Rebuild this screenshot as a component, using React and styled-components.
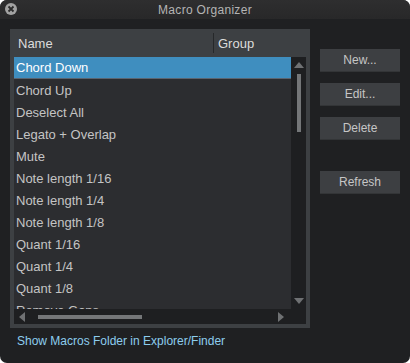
import React, { useState } from "react";
import styled, { createGlobalStyle } from "styled-components";

const GlobalStyle = createGlobalStyle`
  html, body {
    margin: 0;
    padding: 0;
    background: #ffffff;
  }
  body {
    font-family: "Liberation Sans", Arial, sans-serif;
  }
`;

const Window = styled.div`
  width: 410px;
  height: 363px;
  background: #1f2022;
  border-radius: 7px;
  overflow: hidden;
  display: flex;
  flex-direction: column;
`;

const TitleBar = styled.div`
  height: 19px;
  background: linear-gradient(#2e2e2f, #282829);
  position: relative;
  display: flex;
  align-items: center;
  justify-content: center;
  color: #b4b4b4;
  font-size: 12px;
  letter-spacing: 0.3px;
`;

const CloseBtn = styled.div`
  position: absolute;
  left: 5px;
  top: 3px;
  width: 12px;
  height: 12px;
  border-radius: 50%;
  background: #a2a2a2;
  display: flex;
  align-items: center;
  justify-content: center;
`;

const Body = styled.div`
  flex: 1;
  display: flex;
  flex-direction: column;
  padding: 10px 10px 0 10px;
`;

const Main = styled.div`
  display: flex;
  gap: 10px;
`;

const Panel = styled.div`
  width: 300px;
  height: 299px;
  box-sizing: border-box;
  background: #3d4043;
  padding: 0 4px 4px 4px;
  display: flex;
  flex-direction: column;
`;

const Header = styled.div`
  height: 28px;
  display: flex;
  align-items: center;
  color: #dcdcdc;
  font-size: 13px;
  flex-shrink: 0;
`;

const HeaderCell = styled.div`
  width: ${(p) => p.$w}px;
  display: flex;
  align-items: center;
  padding-left: 4px;
  box-sizing: border-box;
  border-right: ${(p) => (p.$divider ? "1px solid #26282a" : "none")};
  margin: ${(p) => (p.$divider ? "4px 0" : "0")};
  height: ${(p) => (p.$divider ? "20px" : "100%")};
`;

const ListArea = styled.div`
  flex: 1;
  display: grid;
  grid-template-columns: 1fr 15px;
  grid-template-rows: 1fr 15px;
  background: #1e1f21;
  overflow: hidden;
`;

const Rows = styled.div`
  background: #2c2d30;
  overflow: hidden;
`;

const Row = styled.div`
  height: 22px;
  display: flex;
  align-items: center;
  padding-left: 2px;
  font-size: 13px;
  color: ${(p) => (p.$selected ? "#ffffff" : "#c4c4c4")};
  background: ${(p) => (p.$selected ? "#3f8ebf" : "transparent")};
  border-bottom: ${(p) => (p.$selected ? "1px solid #5a6470" : "none")};
  box-sizing: border-box;
  white-space: nowrap;
`;

const VScroll = styled.div`
  display: flex;
  flex-direction: column;
  align-items: center;
  padding: 4px 0;
  box-sizing: border-box;
`;

const VThumb = styled.div`
  width: 4px;
  height: 58px;
  background: #747678;
  margin-top: 5px;
`;

const Spacer = styled.div`
  flex: 1;
`;

const HScroll = styled.div`
  display: flex;
  align-items: center;
  padding: 0 6px 0 4px;
`;

const HTrack = styled.div`
  flex: 1;
  display: flex;
  align-items: center;
  padding: 0 10px 0 12px;
`;

const HThumb = styled.div`
  width: 104px;
  height: 4px;
  background: #747678;
`;

const Arrow = styled.svg`
  display: block;
  flex-shrink: 0;
`;

const Buttons = styled.div`
  display: flex;
  flex-direction: column;
  padding-top: 20px;
`;

const Button = styled.button`
  width: 80px;
  height: 23px;
  background: #3d3f42;
  border: none;
  border-bottom: 1px solid #333537;
  color: #c6c6c6;
  font-family: "Liberation Sans", Arial, sans-serif;
  font-size: 12px;
  padding: 0;
  margin-bottom: ${(p) => p.$mb}px;
  cursor: default;
`;

const Link = styled.div`
  margin-top: 6px;
  padding-left: 7px;
  color: #8dcdee;
  font-size: 12px;
`;

const items = [
  "Chord Down",
  "Chord Up",
  "Deselect All",
  "Legato + Overlap",
  "Mute",
  "Note length 1/16",
  "Note length 1/4",
  "Note length 1/8",
  "Quant 1/16",
  "Quant 1/4",
  "Quant 1/8",
  "Remove Gaps",
];

const Tri = ({ dir }) => {
  const pts = {
    up: "0,7 5,1 10,7",
    down: "0,1 5,7 10,1",
    left: "7,0 1,5 7,10",
    right: "1,0 7,5 1,10",
  }[dir];
  const vert = dir === "up" || dir === "down";
  return (
    <Arrow width={vert ? 10 : 8} height={vert ? 8 : 10} viewBox={vert ? "0 0 10 8" : "0 0 8 10"}>
      <polygon points={pts} fill="#6f7173" />
    </Arrow>
  );
};

const App = () => {
  const [selected, setSelected] = useState(0);

  return (
    <>
      <GlobalStyle />
      <Window>
        <TitleBar>
          <CloseBtn>
            <svg width="8" height="8" viewBox="0 0 8 8">
              <path d="M1.5 1.5 L6.5 6.5 M6.5 1.5 L1.5 6.5" stroke="#2b2b2b" strokeWidth="1.8" />
            </svg>
          </CloseBtn>
          Macro Organizer
        </TitleBar>
        <Body>
          <Main>
            <Panel>
              <Header>
                <HeaderCell $w={200} $divider>Name</HeaderCell>
                <HeaderCell $w={90}>Group</HeaderCell>
              </Header>
              <ListArea>
                <Rows>
                  {items.map((item, i) => (
                    <Row key={item} $selected={i === selected} onClick={() => setSelected(i)}>
                      {item}
                    </Row>
                  ))}
                </Rows>
                <VScroll>
                  <Tri dir="up" />
                  <VThumb />
                  <Spacer />
                  <Tri dir="down" />
                </VScroll>
                <HScroll>
                  <Tri dir="left" />
                  <HTrack>
                    <HThumb />
                  </HTrack>
                  <Tri dir="right" />
                </HScroll>
                <div />
              </ListArea>
            </Panel>
            <Buttons>
              <Button $mb={11}>New...</Button>
              <Button $mb={11}>Edit...</Button>
              <Button $mb={31}>Delete</Button>
              <Button $mb={0}>Refresh</Button>
            </Buttons>
          </Main>
          <Link>Show Macros Folder in Explorer/Finder</Link>
        </Body>
      </Window>
    </>
  );
};

export default App;
